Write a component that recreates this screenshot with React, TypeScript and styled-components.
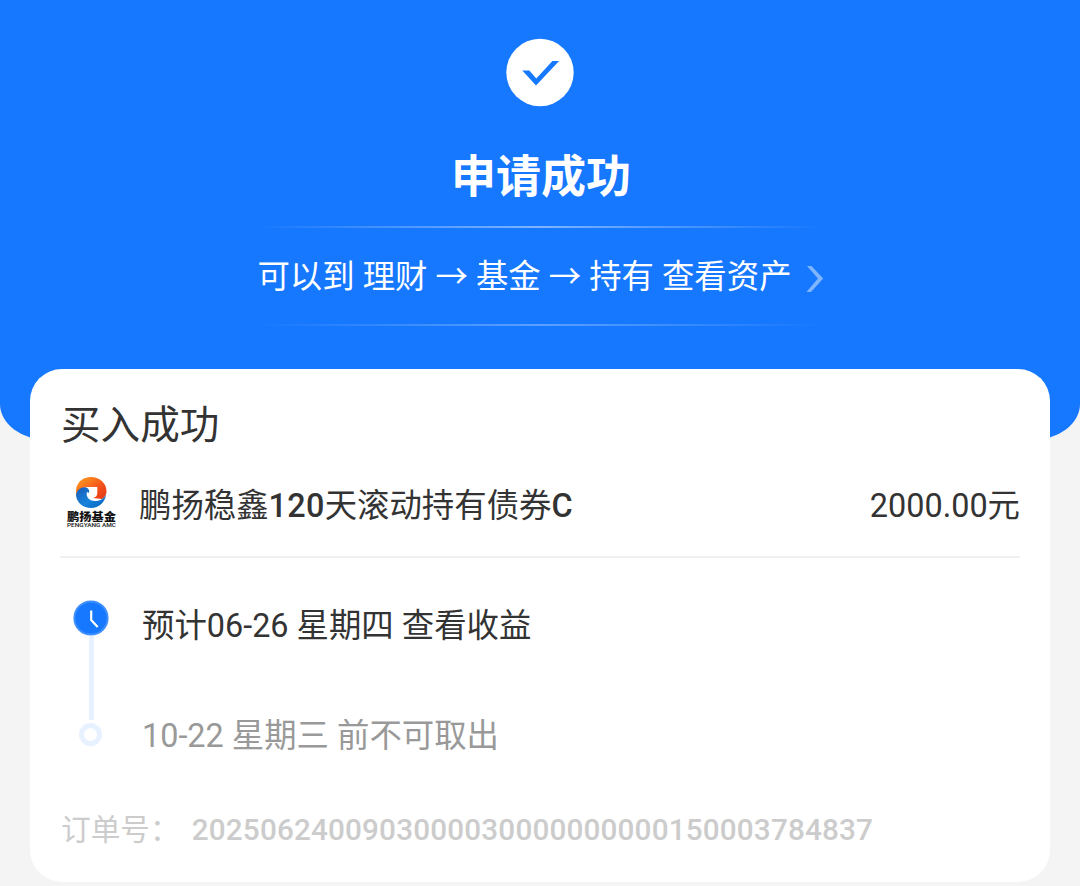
import React from "react";
import styled, { createGlobalStyle } from "styled-components";

const GlobalStyle = createGlobalStyle`
  * {
    box-sizing: border-box;
  }

  body {
    margin: 0;
    background: #f4f4f4;
    font-family: Roboto, "Noto Sans CJK SC", sans-serif;
    color: #333;
  }
`;

const Page = styled.main`
  height: 886px;
  overflow: hidden;
`;

const Hero = styled.header`
  display: flex;
  flex-direction: column;
  align-items: center;
  height: 440px;
  padding-top: 38px;
  border-radius: 0 0 48px 48px / 0 0 36px 36px;
  background: #1677ff;
  color: #fff;
`;

const HeroTitle = styled.h1`
  margin: 38px 0 15px 2px;
  font-size: 45px;
  line-height: 66px;
  font-weight: 700;
`;

const FadeLine = styled.div<{ $strength: number }>`
  width: 570px;
  height: 2px;
  background: linear-gradient(
    90deg,
    rgba(255, 255, 255, 0),
    rgba(255, 255, 255, ${(p) => p.$strength}) 50%,
    rgba(255, 255, 255, 0)
  );
`;

const AssetLink = styled.div`
  display: flex;
  align-items: center;
  gap: 14px;
  height: 96px;
  padding: 1px 0 0 1px;
  font-size: 32.4px;
  line-height: 48px;
  white-space: nowrap;

  svg {
    margin-top: 5px;
  }
`;

const Card = styled.section`
  height: 513px;
  margin: -71px 30px 0;
  padding: 31px 30px 0;
  border-radius: 32px;
  background: #fff;
`;

const CardTitle = styled.h2`
  margin: 0 0 0 1px;
  font-size: 39.6px;
  line-height: 52px;
  font-weight: 400;
`;

const FundRow = styled.div`
  display: flex;
  align-items: center;
  height: 106px;
  padding-left: 6px;
  border-bottom: 2px solid #f0f0f0;
  font-size: 32.4px;
  line-height: 48px;
`;

const FundLogo = styled.div`
  display: flex;
  width: 73px;
  padding-bottom: 5px;
`;

const FundName = styled.div`
  flex: 1;
  padding-top: 4px;

  b {
    font-weight: 500;
    letter-spacing: 0.3px;
  }
`;

const Amount = styled.div`
  padding-top: 3px;
`;

const Timeline = styled.div`
  display: flex;
  height: 216px;
  padding: 42px 0 0 13px;
`;

const Track = styled.div`
  display: flex;
  flex-direction: column;
  align-items: center;
  width: 36px;
`;

const Rail = styled.div`
  width: 5px;
  height: 84px;
  background: #e7f1ff;
`;

const Ring = styled.div`
  width: 23px;
  height: 23px;
  margin: 3px 2px 0 0;
  border: 5px solid #e7f1ff;
  border-radius: 50%;
`;

const Steps = styled.div`
  display: flex;
  flex-direction: column;
  gap: 62px;
  padding: 2px 0 0 33px;
`;

const Step = styled.div<{ $muted?: boolean }>`
  font-size: 32.4px;
  line-height: 48px;
  color: ${(p) => (p.$muted ? "#999" : "#333")};
`;

const Order = styled.div`
  display: flex;
  gap: 12px;
  padding: 34px 0 0 1px;
  font-size: 29.7px;
  line-height: 44px;
  color: #ccc;

  b {
    font-weight: 500;
    letter-spacing: 0.16px;
  }
`;

function CheckBadge() {
  return (
    <svg width="68" height="69" viewBox="0 0 68 69">
      <circle cx="34" cy="34.5" r="33.7" fill="#fff" />
      <path d="M16.3 32.6h7l7 7.8L46.4 22.900h6.700L30 47.400z" fill="#1677ff" />
    </svg>
  );
}

function Chevron() {
  return (
    <svg width="18" height="28" viewBox="0 0 18 28">
      <path d="M1 1h4.500l11.700 12.500L5 27H.5l11.400-13.500z" fill="#fff" opacity=".45" />
    </svg>
  );
}

function PengyangLogo() {
  return (
    <svg width="52" height="52" viewBox="0 0 52 52">
      <defs>
        <linearGradient id="flame" x1="0" y1="0" x2="1" y2="1">
          <stop offset="0" stopColor="#ffa51f" />
          <stop offset=".6" stopColor="#f4511c" />
          <stop offset="1" stopColor="#e43a12" />
        </linearGradient>
        <linearGradient id="wave" x1="0" y1="0" x2="1" y2="1">
          <stop offset="0" stopColor="#1a5cb8" />
          <stop offset=".55" stopColor="#1683db" />
          <stop offset="1" stopColor="#0b5fb8" />
        </linearGradient>
      </defs>
      <path
        d="M11.500 21.500C7 10 14.500 1 25 1c9 0 15.500 6.500 15.500 14.500 0 3.500-2 6-4.500 7.500l-9-1c3-.8 4.300-2.500 4.300-5v-6h-8.800c-5.500-.5-10 3.500-11 10.500z"
        fill="url(#flame)"
      />
      <path
        d="M10 19.500c.500-4.500 3.500-8 8.500-8.200 2.200 0 3.700 1.200 4.700 3.200l-.200 2.500-2-1c-1.500 4.500 2 9 8 9 5.500 0 9-2.500 11-6.500C39 26.500 33 32 25 32c-8 0-14-5-15-12.500z"
        fill="url(#wave)"
      />
      <text
        x="1"
        y="44.500"
        textLength="49"
        lengthAdjust="spacingAndGlyphs"
        fontSize="11"
        fontWeight="900"
        fill="#111"
      >
        鹏扬基金
      </text>
      <text
        x="1"
        y="50.500"
        textLength="49"
        lengthAdjust="spacingAndGlyphs"
        fontFamily="Roboto, sans-serif"
        fontSize="5.600"
        fontWeight="500"
        fill="#111"
      >
        PENGYANG AMC
      </text>
    </svg>
  );
}

function ClockBadge() {
  return (
    <svg width="36" height="36" viewBox="0 0 36 36">
      <circle cx="18" cy="18" r="16.600" fill="#1677ff" stroke="#3f8fff" strokeWidth="2" />
      <path d="M18.200 10.500v9.500l6.500 7" fill="none" stroke="#fff" strokeWidth="2.200" />
    </svg>
  );
}

export default function App() {
  return (
    <Page>
      <GlobalStyle />
      <Hero>
        <CheckBadge />
        <HeroTitle>申请成功</HeroTitle>
        <FadeLine $strength={0.45} />
        <AssetLink>
          <span>可以到 理财 → 基金 → 持有 查看资产</span>
          <Chevron />
        </AssetLink>
        <FadeLine $strength={0.3} />
      </Hero>
      <Card>
        <CardTitle>买入成功</CardTitle>
        <FundRow>
          <FundLogo>
            <PengyangLogo />
          </FundLogo>
          <FundName>
            鹏扬稳鑫<b>120</b>天滚动持有债券<b>C</b>
          </FundName>
          <Amount>2000.00元</Amount>
        </FundRow>
        <Timeline>
          <Track>
            <ClockBadge />
            <Rail />
            <Ring />
          </Track>
          <Steps>
            <Step>预计06-26 星期四 查看收益</Step>
            <Step $muted>10-22 星期三 前不可取出</Step>
          </Steps>
        </Timeline>
        <Order>
          <span>订单号：</span>
          <b>2025062400903000030000000000150003784837</b>
        </Order>
      </Card>
    </Page>
  );
}
